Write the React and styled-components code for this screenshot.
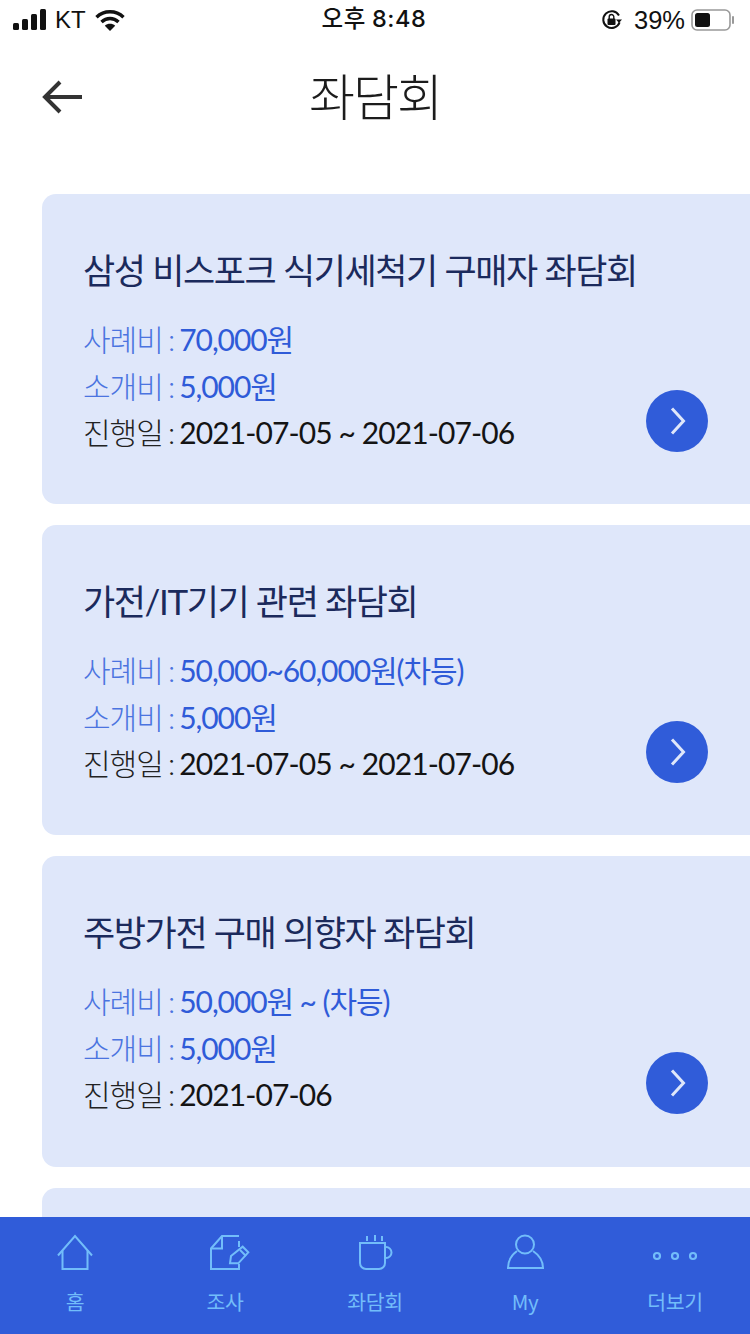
import React from 'react';
import styled, { createGlobalStyle } from 'styled-components';

const GlobalStyle = createGlobalStyle`
  html, body {
    margin: 0;
    padding: 0;
    background: #fff;
  }
  body {
    font-family: Lato, "Noto Sans CJK KR", sans-serif;
  }
`;

const Page = styled.div`
  width: 750px;
  height: 1334px;
  display: flex;
  flex-direction: column;
  overflow: hidden;
  background: #fff;
`;

const StatusBar = styled.div`
  height: 40px;
  flex: none;
  display: grid;
  grid-template-columns: 1fr auto 1fr;
  align-items: center;
  padding: 0 15px 0 13px;
  box-sizing: border-box;
  color: #111;
`;

const StatusGroup = styled.div`
  display: flex;
  align-items: center;
  justify-content: ${(p) => (p.$end ? 'flex-end' : 'flex-start')};
`;

const Carrier = styled.span`
  font-family: "Liberation Sans", sans-serif;
  font-size: 24px;
  margin: 0 9px 0 9px;
`;

const Clock = styled.span`
  font-family: Inter, "Noto Sans CJK KR", sans-serif;
  font-size: 23.500px;
  line-height: 30px;
  margin-top: -2px;
  font-weight: 500;
  letter-spacing: 0.6px;
  word-spacing: -1px;
`;

const Percent = styled.span`
  font-family: "Liberation Sans", sans-serif;
  font-size: 25.500px;
  margin: 0 6px 0 11px;
`;

const Header = styled.header`
  height: 114px;
  flex: none;
  display: grid;
  grid-template-columns: 1fr auto 1fr;
  align-items: center;
  padding: 0 42px;
  box-sizing: border-box;
`;

const BackButton = styled.div`
  display: flex;
  align-items: center;
  color: #333;
`;

const Title = styled.h1`
  margin: -6px 0 0;
  font-family: "Noto Sans CJK KR", sans-serif;
  font-size: 50px;
  font-weight: 300;
  letter-spacing: -2px;
  color: #1c1c1c;
`;

const CardList = styled.main`
  flex: 1;
  min-height: 0;
  overflow: hidden;
  display: flex;
  flex-direction: column;
  gap: 21px;
  padding: 40px 0 0 42px;
`;

const Card = styled.article`
  flex: none;
  height: 310.200px;
  box-sizing: border-box;
  padding: 52px 42px 47px 41px;
  display: flex;
  justify-content: space-between;
  align-items: flex-end;
  background: #dfe7fa;
  border-radius: 14px 0 0 14px;
`;

const CardBody = styled.div`
  align-self: flex-start;
`;

const CardTitle = styled.h2`
  margin: 0 0 22px;
  font-size: 35px;
  line-height: 48px;
  font-weight: 400;
  letter-spacing: -1.400px;
  color: #1b2a5c;
  white-space: nowrap;
`;

const InfoLine = styled.div`
  font-size: 30px;
  line-height: 46.500px;
  letter-spacing: ${(p) => (p.$dark ? '-0.9px' : '-1.1px')};
  white-space: nowrap;
  color: ${(p) => (p.$dark ? '#141414' : '#2f5bd8')};
`;

const InfoLabel = styled.span`
  font-weight: 300;
  word-spacing: -2px;
  letter-spacing: -1px;
  color: ${(p) => (p.$dark ? '#222' : '#4b74e0')};
`;

const GoButton = styled.div`
  flex: none;
  width: 62px;
  height: 62px;
  margin-bottom: 5.200px;
  border-radius: 50%;
  background: #305cd9;
  display: flex;
  align-items: center;
  justify-content: center;
  padding-left: 2px;
  box-sizing: border-box;
`;

const TabBar = styled.nav`
  height: 117px;
  flex: none;
  display: grid;
  grid-template-columns: repeat(5, 150px);
  background: #305cd9;
`;

const Tab = styled.div`
  display: flex;
  flex-direction: column;
  align-items: center;
  padding-top: 16px;
  color: #72bdfa;
`;

const TabLabel = styled.span`
  margin-top: 10px;
  font-size: 20.500px;
  line-height: 28px;
  letter-spacing: -0.3px;
  font-family: "Noto Sans CJK KR", sans-serif;
  font-weight: 400;
`;

const SignalIcon = () => (
  <svg width="33" height="22" viewBox="0 0 33 22" fill="#111">
    <rect x="0" y="14" width="6" height="7" rx="1.500" />
    <rect x="9" y="10" width="6" height="11" rx="1.500" />
    <rect x="18" y="5" width="6" height="16" rx="1.500" />
    <rect x="27" y="0" width="6" height="21" rx="1.500" />
  </svg>
);

const WifiIcon = () => (
  <svg width="30" height="22" viewBox="0 0 30 22" fill="none" stroke="#111" strokeWidth="3.400">
    <path d="M1.500 8.200C9 1 21 1 28.500 8.200" />
    <path d="M6.500 13C11.500 8.300 18.500 8.300 23.500 13" />
    <path d="M15 22l-5.200-5.200c3-2.600 7.400-2.600 10.400 0z" fill="#111" stroke="none" />
  </svg>
);

const LockIcon = () => (
  <svg width="22" height="22" viewBox="0 0 22 22" fill="none" stroke="#111">
    <path d="M18.600 13.400A8.400 8.400 0 1 1 18 6.500" strokeWidth="2" />
    <path d="M21 10.400l-3 3.600-3-3.600z" fill="#111" stroke="none" />
    <rect x="6.500" y="9.500" width="8" height="6.500" rx="1" fill="#111" stroke="none" />
    <path d="M8.200 10V7.800a2.300 2.300 0 0 1 4.600 0V10" strokeWidth="1.400" />
  </svg>
);

const BatteryIcon = () => (
  <svg width="44" height="22" viewBox="0 0 44 22" fill="none">
    <rect x="1" y="1" width="38" height="20" rx="5" stroke="#999" strokeWidth="1.600" />
    <rect x="4" y="4" width="15" height="14" rx="2.500" fill="#111" />
    <path d="M42 8v6" stroke="#999" strokeWidth="2" strokeLinecap="round" />
  </svg>
);

const BackIcon = () => (
  <svg width="40" height="34" viewBox="0 0 40 34" fill="none" stroke="currentColor" strokeWidth="4">
    <path d="M40 17H3" />
    <path d="M18 2L3 17l15 15" />
  </svg>
);

const ChevronIcon = () => (
  <svg width="16" height="28" viewBox="0 0 16 28" fill="none" stroke="#dfe7fa" strokeWidth="3">
    <path d="M2 1.500L13.500 14 2 26.500" />
  </svg>
);

const tabIconProps = {
  width: 44,
  height: 44,
  viewBox: '0 0 44 44',
  fill: 'none',
  stroke: 'currentColor',
  strokeWidth: 2,
  overflow: 'visible',
};

const HomeIcon = () => (
  <svg {...tabIconProps}>
    <path d="M5 22.500L22 3l17 19.500" />
    <path d="M9.500 17.500V36h25V17.500" />
  </svg>
);

const SurveyIcon = () => (
  <svg {...tabIconProps}>
    <path d="M36 3H19L8 15.500V36h28v-5" />
    <path d="M19 3v12.500H8" />
    <path d="M36 8v6" />
    <path d="M28 23L39.700 13.700 45.300 19.300 35.300 30.300H27z" />
    <path d="M37 17l6 6" />
  </svg>
);

const CupIcon = () => (
  <svg {...tabIconProps}>
    <path d="M7 10h25v20a6 6 0 0 1-6 6H13a6 6 0 0 1-6-6z" />
    <path d="M32 14h1a5.500 5.500 0 0 1 0 11h-1" />
    <path d="M14 3v5M22 2v6M29 3v5" />
  </svg>
);

const PersonIcon = () => (
  <svg {...tabIconProps}>
    <circle cx="22" cy="11.500" r="9" />
    <path d="M14 18C8.500 22 5 28 5 35h35C40 28 36 22 30 18" />
  </svg>
);

const MoreIcon = () => (
  <svg {...tabIconProps} width="46" viewBox="0 0 46 44" strokeWidth="2.200">
    <circle cx="5" cy="23" r="3" />
    <circle cx="23" cy="23" r="3" />
    <circle cx="41" cy="23" r="3" />
  </svg>
);

const cards = [
  {
    title: '삼성 비스포크 식기세척기 구매자 좌담회',
    fee: '70,000원',
    referral: '5,000원',
    date: '2021-07-05 ~ 2021-07-06',
  },
  {
    title: '가전/IT기기 관련 좌담회',
    fee: '50,000~60,000원(차등)',
    referral: '5,000원',
    date: '2021-07-05 ~ 2021-07-06',
  },
  {
    title: '주방가전 구매 의향자 좌담회',
    fee: '50,000원 ~ (차등)',
    referral: '5,000원',
    date: '2021-07-06',
  },
];

const tabs = [
  { label: '홈', Icon: HomeIcon },
  { label: '조사', Icon: SurveyIcon },
  { label: '좌담회', Icon: CupIcon },
  { label: 'My', Icon: PersonIcon },
  { label: '더보기', Icon: MoreIcon },
];

const App = () => {
  return (
    <Page>
      <GlobalStyle />
      <StatusBar>
        <StatusGroup>
          <SignalIcon />
          <Carrier>KT</Carrier>
          <WifiIcon />
        </StatusGroup>
        <Clock>오후 8:48</Clock>
        <StatusGroup $end>
          <LockIcon />
          <Percent>39%</Percent>
          <BatteryIcon />
        </StatusGroup>
      </StatusBar>
      <Header>
        <BackButton>
          <BackIcon />
        </BackButton>
        <Title>좌담회</Title>
      </Header>
      <CardList>
        {cards.map((card) => (
          <Card key={card.title}>
            <CardBody>
              <CardTitle>{card.title}</CardTitle>
              <InfoLine>
                <InfoLabel>사례비 : </InfoLabel>
                {card.fee}
              </InfoLine>
              <InfoLine>
                <InfoLabel>소개비 : </InfoLabel>
                {card.referral}
              </InfoLine>
              <InfoLine $dark>
                <InfoLabel $dark>진행일 : </InfoLabel>
                {card.date}
              </InfoLine>
            </CardBody>
            <GoButton>
              <ChevronIcon />
            </GoButton>
          </Card>
        ))}
        <Card />
      </CardList>
      <TabBar>
        {tabs.map(({ label, Icon }) => (
          <Tab key={label}>
            <Icon />
            <TabLabel>{label}</TabLabel>
          </Tab>
        ))}
      </TabBar>
    </Page>
  );
};

export default App;
